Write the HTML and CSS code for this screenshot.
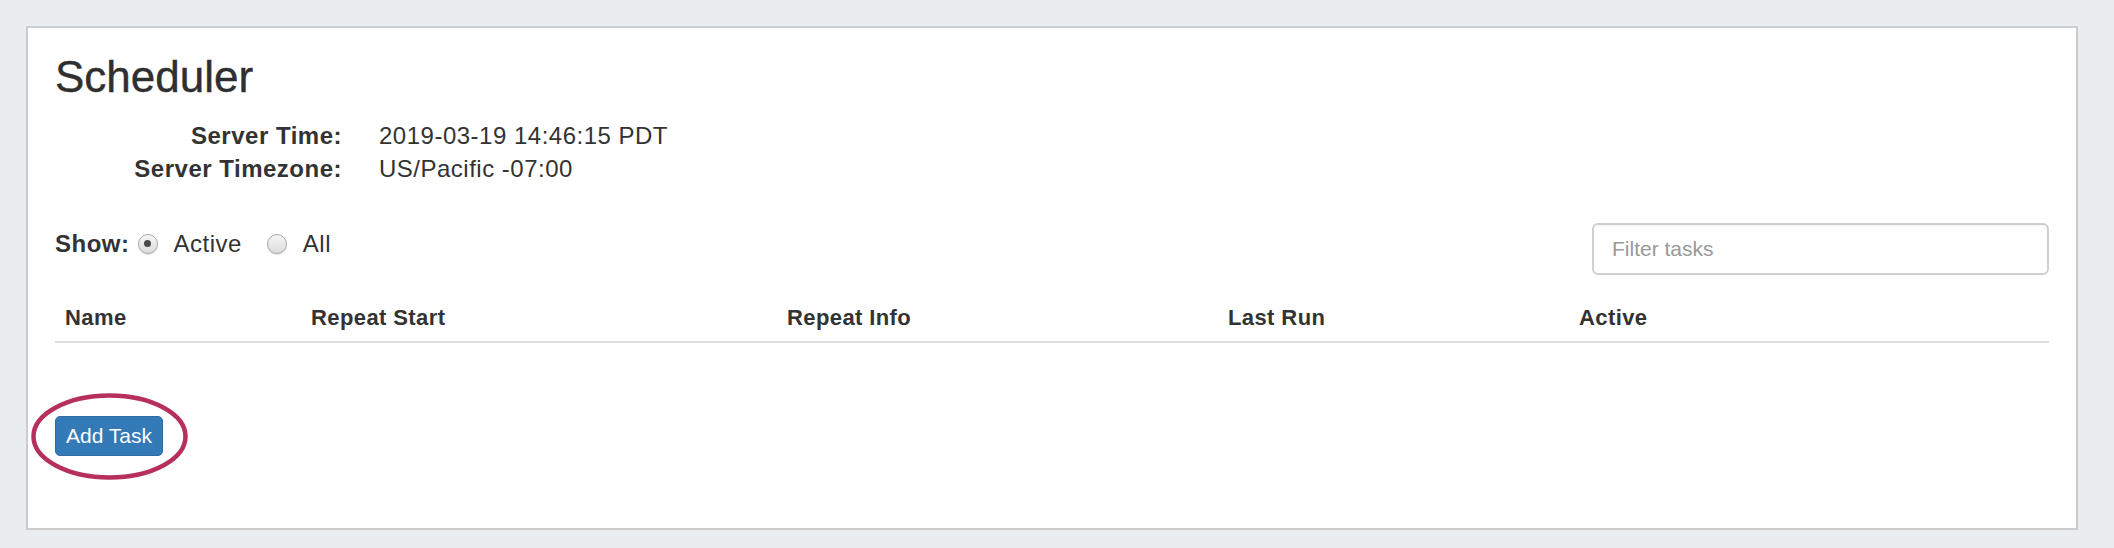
FILE: index.html
```html
<!DOCTYPE html>
<html lang="en">
<head>
  <meta charset="UTF-8">
  <title>Scheduler</title>
  <meta name="viewport" content="width=device-width, initial-scale=1.0">
  <link rel="stylesheet" href="styles.css">
</head>
<body>
<div class="panel">
  <h1 class="panel-title">Scheduler</h1>

  <div class="server-info">
    <div class="info-label">Server Time:</div>
    <div class="info-value">2019-03-19 14:46:15 PDT</div>
    <div class="info-label">Server Timezone:</div>
    <div class="info-value">US/Pacific -07:00</div>
  </div>

  <div class="toolbar">
    <div class="show-filter">
      <span class="show-label">Show:</span>
      <label class="radio-option">
        <input type="radio" name="show" value="active" checked>
        <span>Active</span>
      </label>
      <label class="radio-option">
        <input type="radio" name="show" value="all">
        <span>All</span>
      </label>
    </div>
    <input type="text" class="filter-input" placeholder="Filter tasks">
  </div>

  <table class="task-table">
    <colgroup>
      <col style="width: 246px">
      <col style="width: 476px">
      <col style="width: 441px">
      <col style="width: 351px">
      <col>
    </colgroup>
    <thead>
      <tr>
        <th>Name</th>
        <th>Repeat Start</th>
        <th>Repeat Info</th>
        <th>Last Run</th>
        <th>Active</th>
      </tr>
    </thead>
    <tbody></tbody>
  </table>

  <div class="add-wrap">
    <button class="add-btn">Add Task</button>
    <!-- annotation ring around the button -->
    <svg class="highlight-ring" width="162" height="92" viewBox="0 0 162 92">
      <ellipse cx="79.5" cy="44.5" rx="76" ry="41" fill="none" stroke="#b62f5d" stroke-width="4.5"/>
    </svg>
  </div>
</div>
</body>
</html>
```

FILE: styles.css
```css
html, body {
  margin: 0;
  background: #e9edf0;
  font-family: 'Liberation Sans', Arial, sans-serif;
  color: #333;
}
body {
  padding: 26px;
}
.panel {
  box-sizing: border-box;
  width: 2052px;
  height: 504px;
  background: #fff;
  border: 2px solid #cccccc;
  padding: 26px 27px 0 27px;
}
.panel-title {
  margin: 0;
  font-size: 44px;
  line-height: 46px;
  font-weight: 400;
  color: #2f2f2f;
  -webkit-text-stroke: .4px #2f2f2f;
}

.server-info {
  display: grid;
  grid-template-columns: 287px auto;
  column-gap: 37px;
  margin-top: 19px;
  font-size: 24px;
  line-height: 33px;
  letter-spacing: .5px;
}
.info-label {
  text-align: right;
  font-weight: 700;
}

.toolbar {
  display: flex;
  justify-content: space-between;
  align-items: flex-start;
  margin-top: 38px;
}
.show-filter {
  display: flex;
  align-items: center;
  padding-top: 4px;
  font-size: 24px;
  line-height: 33px;
  letter-spacing: .5px;
}
.show-label {
  font-weight: 700;
  margin-right: 8px;
}
.radio-option {
  display: flex;
  align-items: center;
  margin-right: 25px;
}
.radio-option input {
  -webkit-appearance: none;
  appearance: none;
  box-sizing: border-box;
  width: 20px;
  height: 20px;
  margin: 0 16px 0 0;
  border-radius: 50%;
  border: 1px solid #aaaaaa;
  background: linear-gradient(#f6f6f6, #dcdcdc);
  box-shadow: 0 1px 1px rgba(0,0,0,.15);
  position: relative;
}
.radio-option input:checked::after {
  content: "";
  position: absolute;
  left: 5.5px;
  top: 5.5px;
  width: 7px;
  height: 7px;
  border-radius: 50%;
  background: #4a4a4a;
}

.filter-input {
  box-sizing: border-box;
  width: 457px;
  height: 52px;
  padding: 0 18px;
  font-family: inherit;
  font-size: 21px;
  color: #555;
  border: 2px solid #cfcfcf;
  border-radius: 6px;
  box-shadow: inset 0 1px 2px rgba(0,0,0,.06);
  outline: none;
}
.filter-input::placeholder {
  color: #999;
}

.task-table {
  width: 100%;
  margin-top: 18px;
  border-collapse: collapse;
  table-layout: fixed;
}
.task-table th {
  text-align: left;
  font-size: 22px;
  line-height: 30px;
  letter-spacing: .4px;
  font-weight: 700;
  padding: 10px 10px 8px 10px;
  border-bottom: 2px solid #dddddd;
}

.add-wrap {
  position: relative;
  display: inline-block;
  margin-top: 73px;
}
.add-btn {
  display: block;
  font-family: inherit;
  font-size: 21px;
  line-height: 24px;
  padding: 7px 10px;
  color: #fff;
  background: #337ab7;
  border: 1px solid #2e6da4;
  border-radius: 5px;
  cursor: pointer;
}
.highlight-ring {
  position: absolute;
  left: -25px;
  top: -24px;
  pointer-events: none;
}
```
